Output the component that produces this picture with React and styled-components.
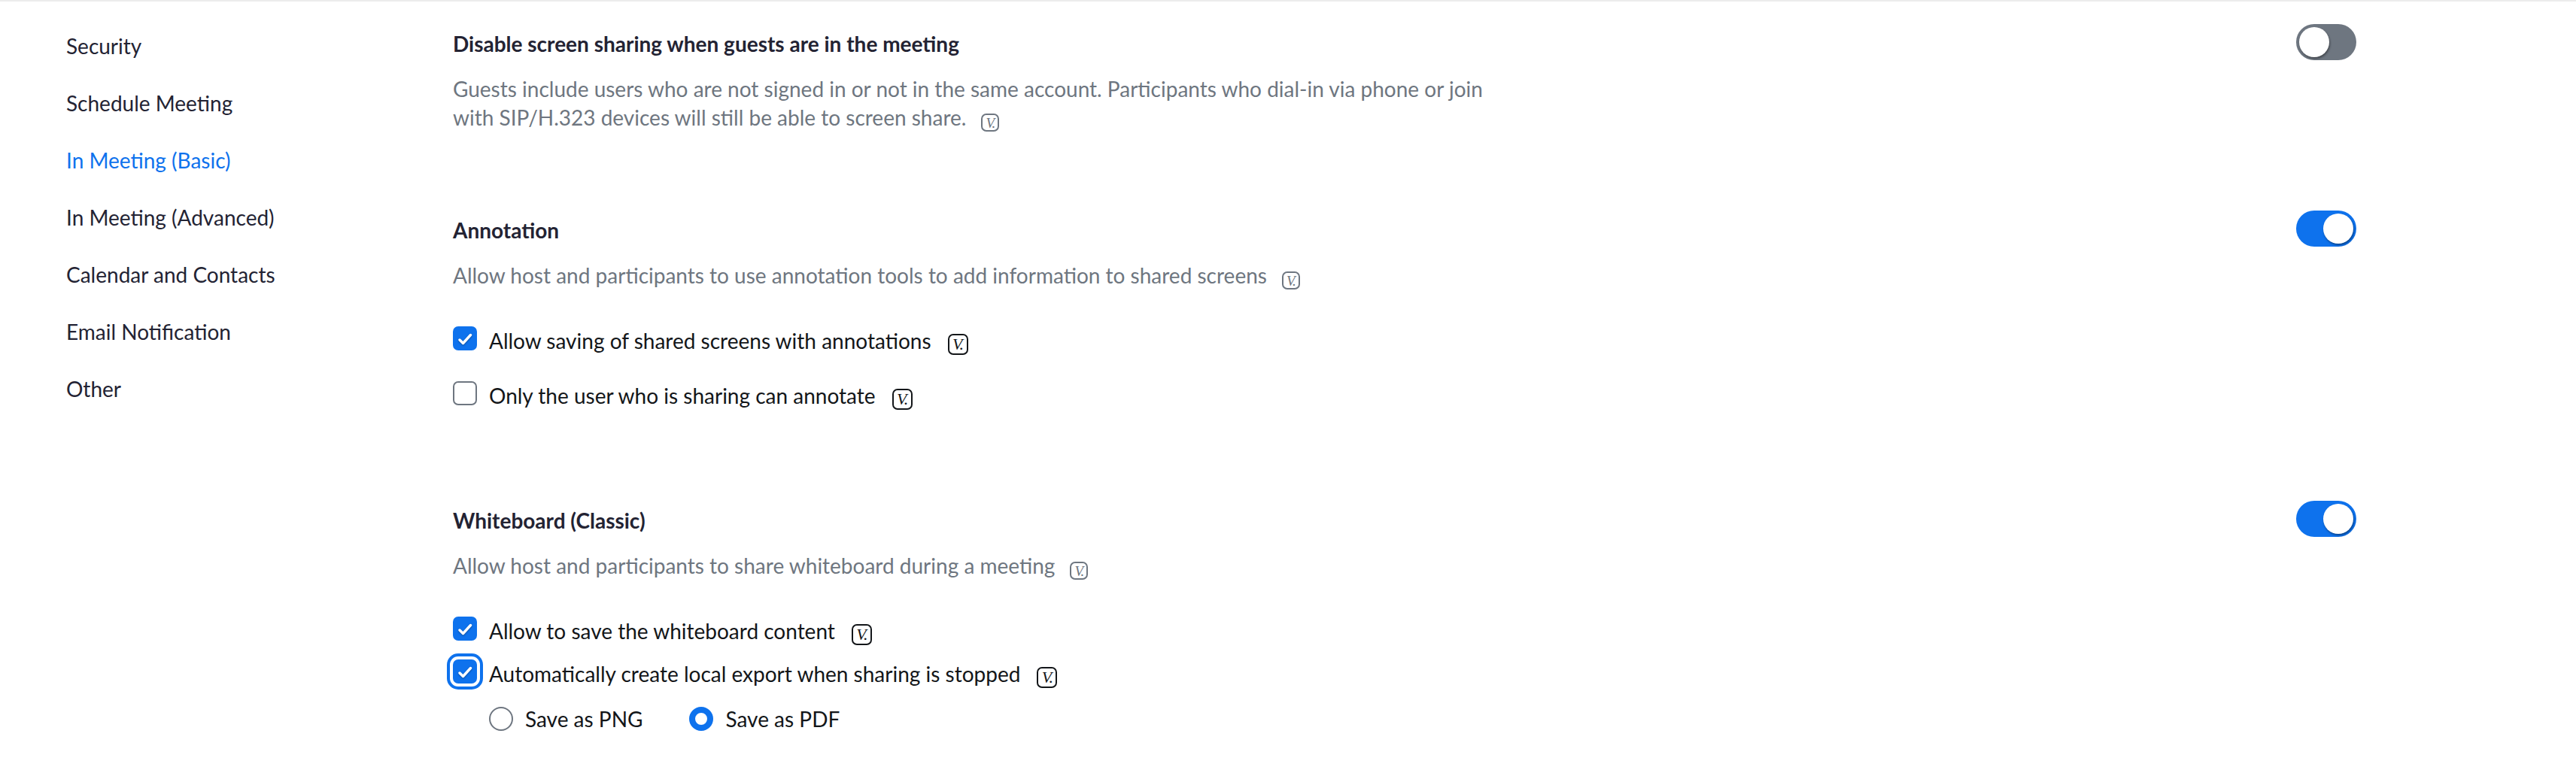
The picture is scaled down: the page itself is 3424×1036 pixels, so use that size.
import React from "react";
import styled, { createGlobalStyle } from "styled-components";

const Global = createGlobalStyle`
  html, body { margin: 0; padding: 0; background: #fff; overflow: hidden; }
  body { font-family: Lato, "Noto Sans", sans-serif; font-size: 28px; color: #232333; }
`;

const Page = styled.div`
  display: flex;
  width: 3424px;
  height: 1036px;
  box-sizing: border-box;
  border-top: 2px solid #ececec;
  overflow: hidden;
`;

const Sidebar = styled.nav`
  width: 602px;
  flex: none;
  box-sizing: border-box;
  padding: 21px 0 0 88px;
  display: flex;
  flex-direction: column;
  align-items: flex-start;
`;

const NavItem = styled.a`
  height: 76px;
  line-height: 76px;
  font-size: 28px;
  color: ${(p) => (p.$active ? "#0e72ed" : "#232333")};
`;

const Main = styled.main`
  width: 2530px;
  flex: none;
  padding-top: 30px;
`;

const Section = styled.section`
  margin-bottom: ${(p) => p.$after}px;
`;

const Header = styled.div`
  height: 48px;
  display: flex;
  align-items: center;
  justify-content: space-between;
`;

const Title = styled.h3`
  margin: 0;
  padding-top: 4px;
  font-size: 28px;
  line-height: 40px;
  font-weight: 700;
  color: #232333;
`;

const Toggle = styled.span`
  width: 80px;
  height: 48px;
  box-sizing: border-box;
  padding: 4px;
  border-radius: 24px;
  display: flex;
  justify-content: ${(p) => (p.$on ? "flex-end" : "flex-start")};
  background: ${(p) => (p.$on ? "#0e72ed" : "#6e7680")};
  &::after {
    content: "";
    width: 40px;
    height: 40px;
    border-radius: 50%;
    background: #fff;
    box-shadow: 1px 2px 3px rgba(0, 0, 0, 0.4);
  }
`;

const Desc = styled.p`
  margin: 19px 0 0;
  width: 1400px;
  font-size: 28px;
  line-height: 38px;
  color: #6e7680;
`;

const Options = styled.div`
  margin-top: 49px;
  display: flex;
  flex-direction: column;
  gap: ${(p) => p.$gap}px;
`;

const Row = styled.div`
  display: flex;
  align-items: flex-start;
  height: 40px;
  color: #131619;
  line-height: 38px;
`;

const Box = styled.span`
  width: 32px;
  height: 32px;
  flex: none;
  box-sizing: border-box;
  margin-right: 16px;
  border-radius: 7px;
  display: flex;
  align-items: center;
  justify-content: center;
  background: ${(p) => (p.$checked ? "#0e72ed" : "#fff")};
  border: ${(p) => (p.$checked ? "none" : "2px solid #6e7680")};
  box-shadow: ${(p) => (p.$focus ? "0 0 0 4px #fff, 0 0 0 8px #0e72ed" : "none")};
`;

const Lock = styled.span`
  display: inline-flex;
  align-items: center;
  justify-content: center;
  box-sizing: border-box;
  font-family: "Liberation Serif", serif;
  font-style: italic;
  line-height: 1;
  width: ${(p) => (p.$muted ? 24 : 27)}px;
  height: ${(p) => (p.$muted ? 24 : 28)}px;
  font-size: ${(p) => (p.$muted ? 19 : 22)}px;
  letter-spacing: -1px;
  border-radius: 7px;
  vertical-align: top;
  border: 2px solid ${(p) => (p.$muted ? "#6e7680" : "#131619")};
  color: ${(p) => (p.$muted ? "#6e7680" : "#131619")};
  margin-left: ${(p) => (p.$muted ? 20 : 22)}px;
  margin-top: ${(p) => (p.$muted ? 14 : 10)}px;
`;

const Radios = styled.div`
  display: flex;
  margin: 23px 0 0 48px;
`;

const RadioLabel = styled.label`
  display: flex;
  align-items: flex-start;
  margin-right: 62px;
  color: #131619;
  line-height: 32px;
`;

const RadioDot = styled.span`
  width: 32px;
  height: 32px;
  flex: none;
  box-sizing: border-box;
  margin-right: 16px;
  border-radius: 50%;
  background: #fff;
  border: ${(p) => (p.$checked ? "8px solid #0e72ed" : "2px solid #6e7680")};
`;

const Check = () => (
  <svg width="32" height="32" viewBox="0 0 32 32" fill="none" style={{ filter: "drop-shadow(0 1px 1px rgba(0,0,0,0.35))" }}>
    <path d="M9 18 L13.5 22.5 L23.5 11.5" stroke="#fff" strokeWidth="3.4" strokeLinecap="round" strokeLinejoin="round" />
  </svg>
);

const nav = ["Security", "Schedule Meeting", "In Meeting (Basic)", "In Meeting (Advanced)", "Calendar and Contacts", "Email Notification", "Other"];

export default function App() {
  return (
    <Page>
      <Global />
      <Sidebar>
        {nav.map((n) => (
          <NavItem key={n} $active={n === "In Meeting (Basic)"}>{n}</NavItem>
        ))}
      </Sidebar>
      <Main>
        <Section $after={105}>
          <Header>
            <Title>Disable screen sharing when guests are in the meeting</Title>
            <Toggle />
          </Header>
          <Desc>
            Guests include users who are not signed in or not in the same account. Participants who dial-in via phone or join with SIP/H.323 devices will still be able to screen share.
            <Lock $muted>V.</Lock>
          </Desc>
        </Section>
        <Section $after={119}>
          <Header>
            <Title>Annotation</Title>
            <Toggle $on />
          </Header>
          <Desc>
            Allow host and participants to use annotation tools to add information to shared screens
            <Lock $muted>V.</Lock>
          </Desc>
          <Options $gap={33}>
            <Row><Box $checked><Check /></Box>Allow saving of shared screens with annotations<Lock>V.</Lock></Row>
            <Row><Box />Only the user who is sharing can annotate<Lock>V.</Lock></Row>
          </Options>
        </Section>
        <Section $after={0}>
          <Header>
            <Title>Whiteboard (Classic)</Title>
            <Toggle $on />
          </Header>
          <Desc>
            Allow host and participants to share whiteboard during a meeting
            <Lock $muted>V.</Lock>
          </Desc>
          <Options $gap={17}>
            <Row><Box $checked><Check /></Box>Allow to save the whiteboard content<Lock>V.</Lock></Row>
            <Row><Box $checked $focus><Check /></Box>Automatically create local export when sharing is stopped<Lock>V.</Lock></Row>
          </Options>
          <Radios>
            <RadioLabel><RadioDot />Save as PNG</RadioLabel>
            <RadioLabel><RadioDot $checked />Save as PDF</RadioLabel>
          </Radios>
        </Section>
      </Main>
    </Page>
  );
}
